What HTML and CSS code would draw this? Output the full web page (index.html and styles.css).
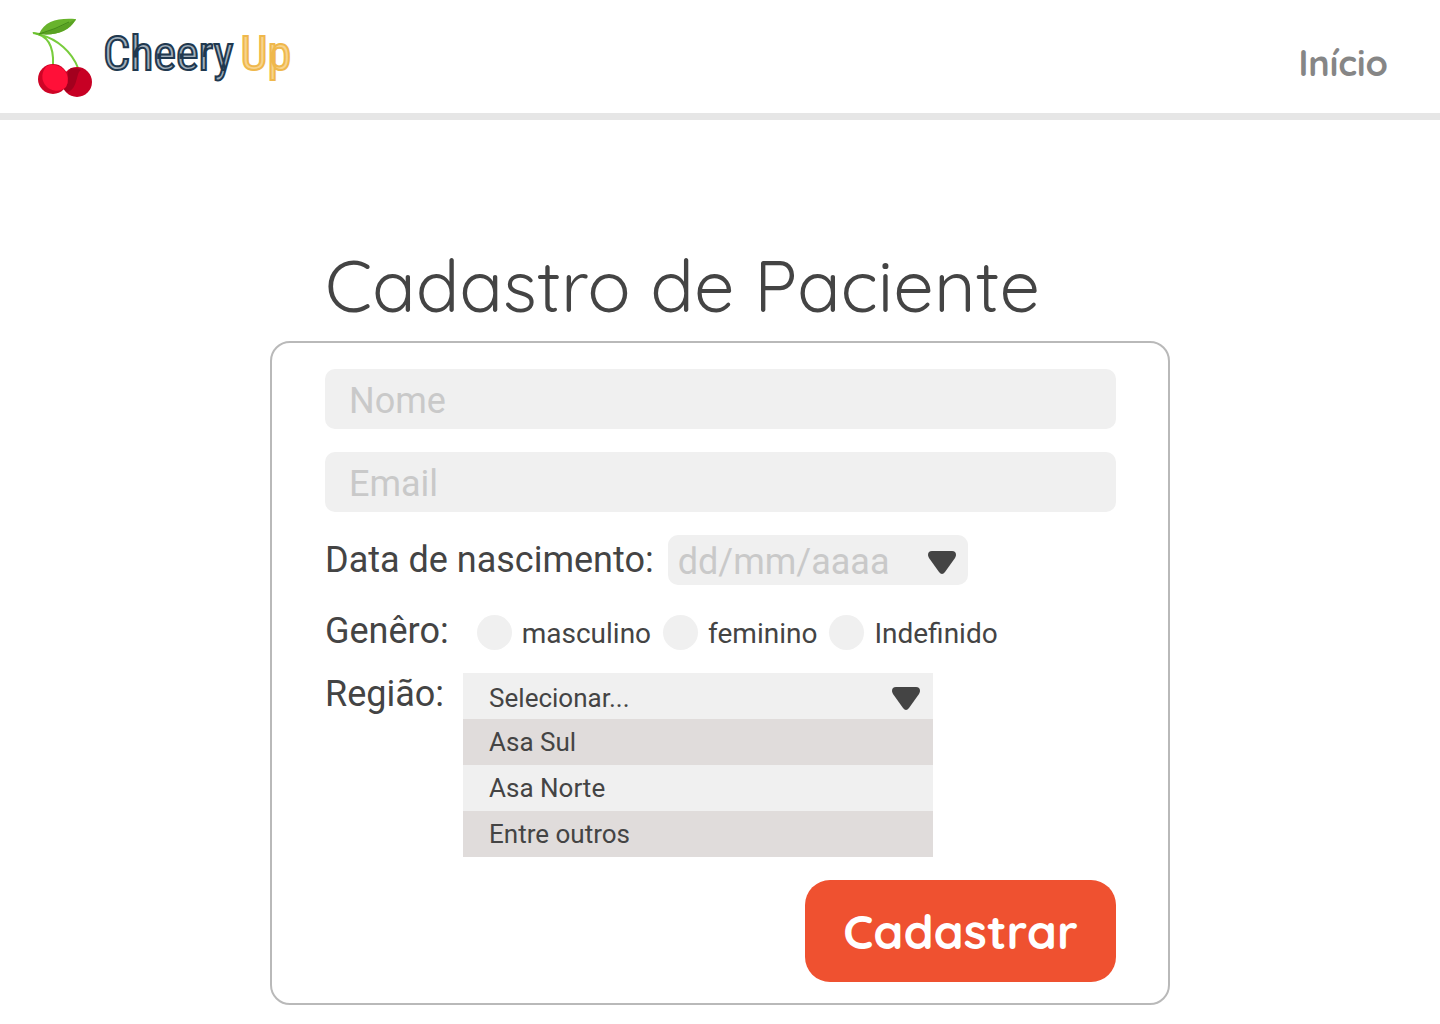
FILE: index.html
```html
<!DOCTYPE html>
<html lang="pt-BR">
<head>
  <meta charset="utf-8">
  <meta name="viewport" content="width=device-width, initial-scale=1">
  <title>Cadastro de Paciente - CheeryUp</title>
  <link rel="stylesheet" href="styles.css">
</head>
<body>
  <header class="topbar">
    <a class="brand" href="#">
      <svg class="brand-icon" viewBox="0 0 62 80" width="62" height="80" aria-hidden="true">
        <path d="M1 16C16 18 22 29 21 48M9 18C25 22 40 35 46 51" fill="none" stroke="#78cc3c" stroke-width="2"/>
        <path d="M0 15L8 16L11 19Q5 19 0 15Z" fill="#6abf2e"/>
        <path d="M7 17C13 4 25 1 43 2Q45 2 43 4C37 14 24 19 7 17Z" fill="#68b32c"/>
        <path d="M7 17C21 13 34 8 44 2C37 14 24 19 7 17Z" fill="#5aa223"/>
        <path d="M7 17Q24 12 37 5" fill="none" stroke="#458a1a" stroke-width="1"/>
        <circle cx="45" cy="65" r="15" fill="#c70024"/>
        <path d="M39 51Q47 51 49 53C44 56 46 69 38 74Q34 77 32 72Q36 62 36 55Z" fill="#a3001e"/>
        <circle cx="21" cy="62" r="15" fill="#cf0426"/>
        <path d="M15 49A15 15 0 0 1 34 70A14 14 0 0 1 15 49Z" fill="#ff1038"/>
      </svg>
      <span class="brand-name"><span>Cheery</span><span class="brand-accent">Up</span></span>
    </a>
    <nav><a class="nav-link" href="#">Início</a></nav>
  </header>

  <main class="page">
    <h1 class="title">Cadastro de Paciente</h1>
    <form class="card">
      <input class="field" type="text" placeholder="Nome" aria-label="Nome">
      <input class="field" type="email" placeholder="Email" aria-label="Email">

      <div class="row row-date">
        <label class="label" for="birth">Data de nascimento:</label>
        <div class="date">
          <input class="date-input" id="birth" type="text" placeholder="dd/mm/aaaa">
          <button class="date-button" type="button" aria-label="Abrir calendário">
            <svg class="arrow" viewBox="0 0 28 23" width="28" height="23" aria-hidden="true"><path d="M4 0H24Q28 0 28 4Q28 5 27 7L17 21Q14 25 11 21L1 7Q0 5 0 4Q0 0 4 0Z"/></svg>
          </button>
        </div>
      </div>

      <div class="row row-gender" role="radiogroup" aria-labelledby="gender">
        <span class="label" id="gender">Genêro:</span>
        <div class="choices">
          <label class="choice"><input class="radio" type="radio" name="gender"><span class="choice-text">masculino</span></label>
          <label class="choice"><input class="radio" type="radio" name="gender"><span class="choice-text">feminino</span></label>
          <label class="choice"><input class="radio" type="radio" name="gender"><span class="choice-text">Indefinido</span></label>
        </div>
      </div>

      <div class="row row-region">
        <label class="label" for="region">Região:</label>
        <div class="dropdown">
          <div class="select-box">
            <select class="select" id="region"><option>Selecionar...</option></select>
            <svg class="arrow" viewBox="0 0 28 23" width="28" height="23" aria-hidden="true"><path d="M4 0H24Q28 0 28 4Q28 5 27 7L17 21Q14 25 11 21L1 7Q0 5 0 4Q0 0 4 0Z"/></svg>
          </div>
          <ul class="options" role="listbox" aria-label="Região">
            <li class="option" role="option">Asa Sul</li>
            <li class="option" role="option">Asa Norte</li>
            <li class="option" role="option">Entre outros</li>
          </ul>
        </div>
      </div>

      <button class="submit" type="submit">Cadastrar</button>
    </form>
  </main>
</body>
</html>
```
FILE: styles.css
```css
* {
  box-sizing: border-box;
}

body {
  margin: 0;
  background: #fff;
  color: #444;
  font-family: Roboto, "Liberation Sans", sans-serif;
}

input,
select,
button {
  margin: 0;
  border: 0;
  font-family: inherit;
  color: inherit;
}

.topbar {
  display: flex;
  justify-content: space-between;
  align-items: center;
  min-height: 120px;
  padding: 0 52px 0 32px;
  border-bottom: 7px solid #e6e6e6;
}

.brand {
  display: flex;
  align-items: center;
  gap: 9px;
  text-decoration: none;
}

.brand-name {
  display: flex;
  gap: 7px;
  padding-bottom: 6px;
  font: 48px/56px "Liberation Sans Narrow", "Roboto Condensed", Roboto, sans-serif;
  color: #a3afba;
  -webkit-text-stroke: 2px #20384f;
  white-space: nowrap;
}

.brand-accent {
  color: #f8d48c;
  -webkit-text-stroke-color: #efb84c;
}

.nav-link {
  display: block;
  padding-top: 12px;
  font: 700 36px/44px Quicksand, Lato, sans-serif;
  color: #868686;
  text-decoration: none;
}

.page {
  max-width: 900px;
  margin: 0 auto;
  padding: 120px 0 19px;
}

.title {
  margin: 0;
  padding: 0 55px 11px;
  font: 400 72px/90px Quicksand, Lato, sans-serif;
}

.card {
  display: flex;
  flex-direction: column;
  gap: 23px;
  padding: 26px 52px 21px 53px;
  border: 2px solid #b9b9b9;
  border-radius: 20px;
}

.field {
  width: 100%;
  height: 60px;
  padding: 4px 24px 0;
  border-radius: 10px;
  background: #f0f0f0;
  font-size: 36px;
}

::placeholder {
  color: #c9c9c9;
  opacity: 1;
}

.row {
  display: flex;
}

.label {
  font-size: 36px;
  line-height: 42px;
}

.row-date {
  align-items: center;
  gap: 14px;
}

.date {
  display: flex;
  width: 300px;
  height: 50px;
  border-radius: 10px;
  background: #f0f0f0;
}

.date-input {
  flex: 1;
  min-width: 0;
  padding: 4px 0 0 10px;
  background: none;
  font-size: 36px;
}

.date-button {
  display: flex;
  align-items: center;
  padding: 5px 12px 0;
  background: none;
}

.arrow {
  fill: #444;
}

.row-gender {
  align-items: flex-end;
  gap: 28px;
  padding-top: 2px;
  margin-bottom: -2px;
}

.choices {
  display: flex;
  gap: 12px;
  padding-bottom: 2px;
}

.choice {
  display: flex;
  align-items: center;
  gap: 10px;
  font-size: 28px;
}

.choice-text {
  padding-top: 4px;
  line-height: 32px;
}

.radio {
  width: 35px;
  height: 35px;
  border-radius: 50%;
  background: #f0f0f0;
  appearance: none;
}

.radio:checked {
  border: 10px solid #f0f0f0;
  background: #444;
}

.row-region {
  gap: 19px;
}

.dropdown {
  width: 470px;
  font-size: 26px;
}

.select-box {
  display: grid;
  align-items: center;
  background: #f0f0f0;
}

.select-box > * {
  grid-area: 1 / 1;
}

.select-box .arrow {
  justify-self: end;
  margin: 5px 13px 0 0;
  pointer-events: none;
}

.select {
  width: 100%;
  height: 46px;
  padding: 4px 48px 0 26px;
  background: none;
  font-size: 26px;
  appearance: none;
}

.options {
  margin: 0;
  padding: 0;
  list-style: none;
}

.option {
  padding: 0 26px;
  background: #f0f0f0;
  line-height: 46px;
}

.option:nth-child(odd) {
  background: #e0dcdb;
}

.submit {
  align-self: flex-end;
  min-width: 311px;
  height: 102px;
  border-radius: 25px;
  background: #ef5130;
  color: #fff;
  font: 700 48px/60px Quicksand, Lato, sans-serif;
}
```
